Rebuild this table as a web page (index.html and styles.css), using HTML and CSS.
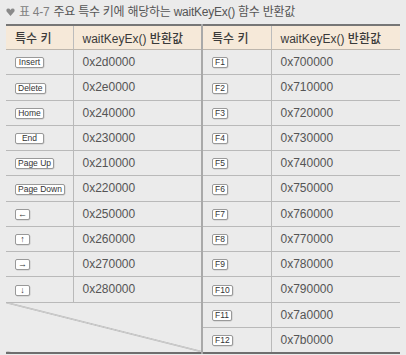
FILE: index.html
```html
<!DOCTYPE html>
<html lang="ko">
<head>
<meta charset="utf-8">
<link rel="stylesheet" href="styles.css">
</head>
<body>
<div class="caption">
  <svg class="arrow" width="9" height="8" viewBox="0 0 9 8"><path d="M4.5 8 L0.6 3.4 Q-0.2 1 1.9 0.6 Q3.6 0.4 4.5 2 Q5.4 0.4 7.1 0.6 Q9.2 1 8.4 3.4 Z" fill="#8a8a8a"/></svg>
  <span class="num">표 4-7</span>
  <span class="ctext">주요 특수 키에 해당하는 waitKeyEx() 함수 반환값</span>
</div>
<table class="keys">
  <colgroup>
    <col class="c-key"><col class="c-val"><col class="c-key2"><col class="c-val">
  </colgroup>
  <thead>
    <tr><th>특수 키</th><th>waitKeyEx() 반환값</th><th class="mid">특수 키</th><th>waitKeyEx() 반환값</th></tr>
  </thead>
  <tbody>
    <tr><td><span class="cap wide">Insert</span></td><td>0x2d0000</td><td class="mid"><span class="cap">F1</span></td><td>0x700000</td></tr>
    <tr><td><span class="cap wide">Delete</span></td><td>0x2e0000</td><td class="mid"><span class="cap">F2</span></td><td>0x710000</td></tr>
    <tr><td><span class="cap wide">Home</span></td><td>0x240000</td><td class="mid"><span class="cap">F3</span></td><td>0x720000</td></tr>
    <tr><td><span class="cap wide">End</span></td><td>0x230000</td><td class="mid"><span class="cap">F4</span></td><td>0x730000</td></tr>
    <tr><td><span class="cap">Page Up</span></td><td>0x210000</td><td class="mid"><span class="cap">F5</span></td><td>0x740000</td></tr>
    <tr><td><span class="cap">Page Down</span></td><td>0x220000</td><td class="mid"><span class="cap">F6</span></td><td>0x750000</td></tr>
    <tr><td><span class="cap arr">←</span></td><td>0x250000</td><td class="mid"><span class="cap">F7</span></td><td>0x760000</td></tr>
    <tr><td><span class="cap arr">↑</span></td><td>0x260000</td><td class="mid"><span class="cap">F8</span></td><td>0x770000</td></tr>
    <tr><td><span class="cap arr">→</span></td><td>0x270000</td><td class="mid"><span class="cap">F9</span></td><td>0x780000</td></tr>
    <tr><td><span class="cap arr">↓</span></td><td>0x280000</td><td class="mid"><span class="cap">F10</span></td><td>0x790000</td></tr>
    <tr><td class="diag" colspan="2" rowspan="2"></td><td class="mid"><span class="cap">F11</span></td><td>0x7a0000</td></tr>
    <tr><td class="mid"><span class="cap">F12</span></td><td>0x7b0000</td></tr>
  </tbody>
</table>
</body>
</html>
```
FILE: styles.css
```css
html, body {
  margin: 0;
  padding: 0;
  background: #ebebeb;
}
body {
  width: 406px;
  height: 355px;
  overflow: hidden;
  font-family: "Liberation Sans", "Noto Sans CJK KR", sans-serif;
}
.caption {
  height: 24px;
  box-sizing: border-box;
  padding: 5px 0 0 6px;
  display: flex;
  align-items: flex-start;
  gap: 4px;
  font-size: 12px;
  line-height: 14px;
  letter-spacing: -0.25px;
  white-space: nowrap;
}
.arrow {
  margin-top: 3px;
  flex: none;
}
.num { color: #808080; }
.ctext { color: #555; }
.keys {
  margin-left: 6px;
  width: 394px;
  table-layout: fixed;
  border-collapse: collapse;
  border-top: 2px solid #767676;
  border-bottom: 2px solid #6e6e6e;
}
.c-key { width: 67px; }
.c-key2 { width: 69px; }
.c-val { width: 129px; }
.keys th {
  height: 23px;
  background: #f6e9d9;
  text-align: left;
  font-weight: 500;
  font-size: 12px;
  color: #3a3a3a;
  padding: 0 0 0 9px;
  border-bottom: 1px solid #bdb6ad;
  border-right: 1px solid #bcbcbc;
}
.keys td {
  height: 24.25px;
  padding: 0 0 0 9px;
  font-size: 12px;
  color: #555;
  border-bottom: 1px solid #b9b9b9;
  border-right: 1px solid #b9b9b9;
  vertical-align: middle;
}
.keys th:last-child, .keys td:last-child { border-right: none; }
.keys .mid { border-left: 2px solid #a9a9a9; }
.keys td.diag {
  padding: 0;
  border-bottom: none;
  border-right: none;
  background: linear-gradient(to top right, transparent calc(50% - 0.8px), #9a9a9a 50%, transparent calc(50% + 0.8px));
}
.keys tr:last-child td { border-bottom: none; }
.cap {
  display: inline-block;
  box-sizing: border-box;
  height: 11px;
  line-height: 9px;
  padding: 0 2px;
  border: 1px solid #999;
  border-radius: 2px;
  background: #fff;
  box-shadow: 0.5px 0.5px 0 #c8c8c8;
  font-size: 8.5px;
  color: #333;
  text-align: center;
  letter-spacing: 0;
  vertical-align: middle;
}
.cap.wide { min-width: 29px; }
.cap.arr { width: 15px; font-size: 9px; }
```
